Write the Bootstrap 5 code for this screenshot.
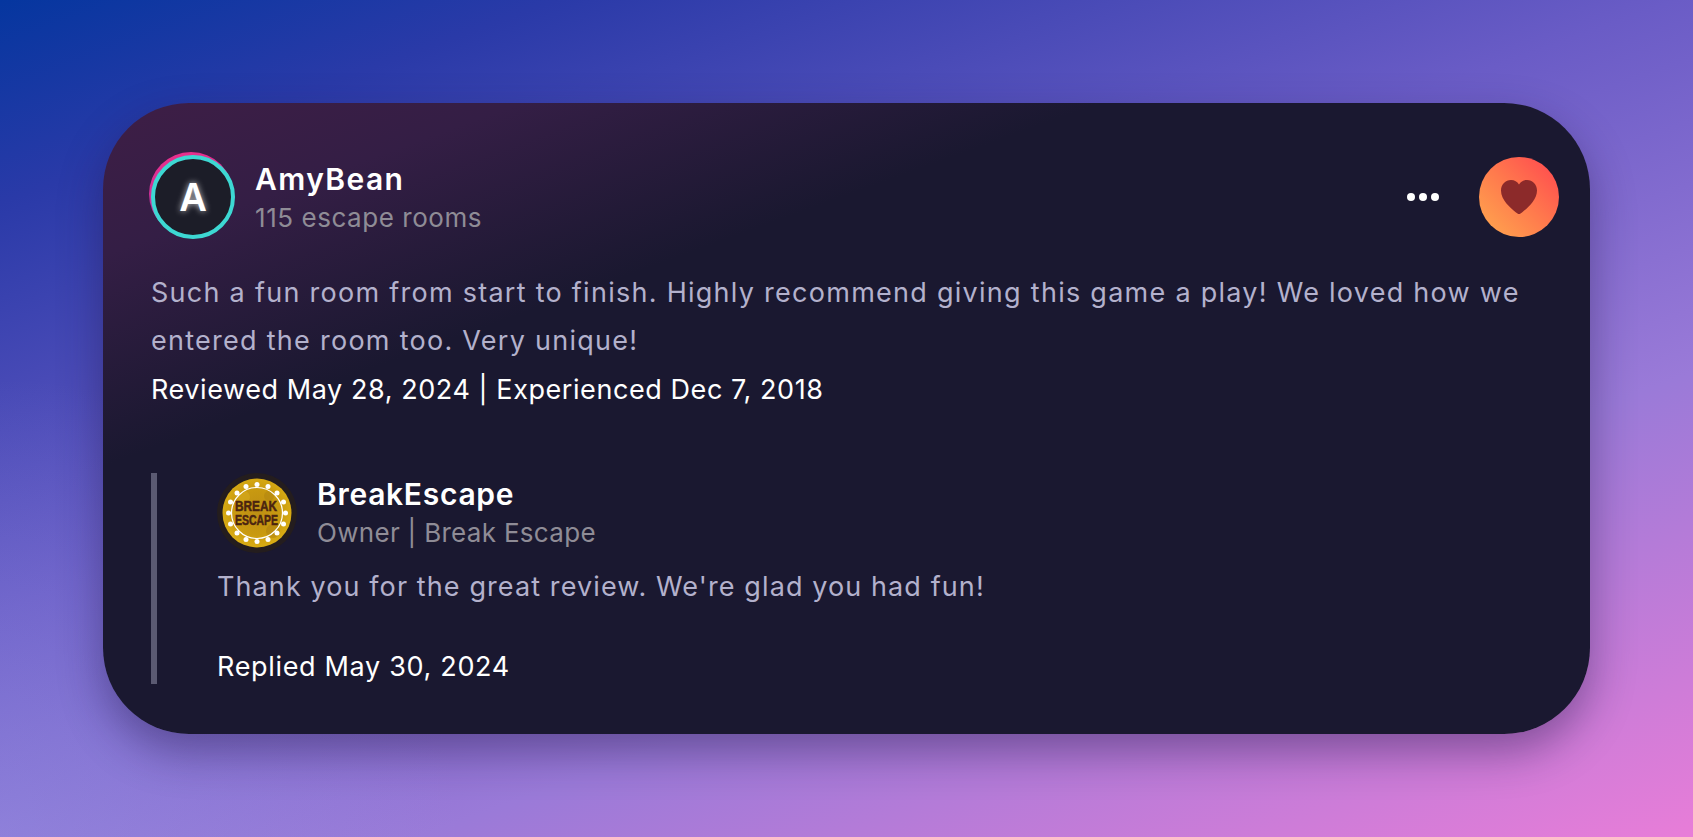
<!doctype html>
<html lang="en">
<head>
<meta charset="utf-8">
<title>Review</title>
<link href="https://cdn.jsdelivr.net/npm/bootstrap@5.3.0/dist/css/bootstrap.min.css" rel="stylesheet">
<style>
html,body{height:100%}
body{font-family:Inter,"Liberation Sans",sans-serif;background:radial-gradient(circle 460px at 0 100%,rgba(160,170,240,.3),rgba(160,170,240,0)),linear-gradient(160deg,#05369f 0%,#2a3aa8 14%,#6a5cc6 42%,#9a7ad8 68%,#e87dd8 100%);overflow:hidden}
.stage{height:837px;padding:103px}
.rv-card{height:631px;border-radius:86px;padding:54px 31px 0 48px;background:linear-gradient(160deg,#3e1e46 0%,#341e45 13%,#1a1830 31%,#1a1830 100%);box-shadow:0 18px 44px rgba(30,20,70,.42)}
.rv-head{height:80px}
.ava-ring{width:84px;height:84px;flex:none;align-self:flex-start;margin:-5px 22px 0 -2px;background:linear-gradient(170deg,#ee2f8a 0%,#c52f9c 55%,#9a45c0 100%)}
.ava-in{width:84px;height:84px;margin:3px 0 0 2px;border:4px solid #3dd8d3;background:#1c1d28;color:#fff;font-size:38px;font-weight:600;text-shadow:0 0 6px rgba(255,255,255,.75)}
.who{color:#fff;font-size:30px;font-weight:600;line-height:40px}
.who-a{letter-spacing:1.4px}
.who-b{letter-spacing:.7px}
.sub{color:#8f8c96;font-size:26px;line-height:38px}
.sub-a{letter-spacing:.55px}
.sub-b{letter-spacing:.3px}
.rv-names{padding-top:2px}
.dots{gap:4px;margin-right:40px}
.dots span{width:8px;height:8px;background:#fff}
.like{width:80px;height:80px;background:linear-gradient(225deg,#ff4d4f 8%,#ff7a4d 50%,#ffa34e 92%)}
.rv-text{color:#b3b1cc;font-size:27px;letter-spacing:1.27px;line-height:48px;margin:32px 0 0}
.rv-meta{color:#fff;font-size:27px;letter-spacing:.57px;line-height:48px;margin:1px 0 0}
.reply{margin-top:59px;height:211px;border-left:6px solid #5b5a72;padding-left:60px}
.logo{width:80px;height:80px;flex:none;margin-right:20px}
.rv-owner{margin-top:1px}
.reply-text{color:#b3b1cc;font-size:27px;letter-spacing:1.1px;line-height:48px;margin:10px 0 0}
.reply-meta{color:#fff;font-size:27px;letter-spacing:.67px;line-height:48px;margin:32px 0 0}
</style>
</head>
<body>
<main class="stage">
  <section class="rv-card">
    <header class="rv-head d-flex align-items-center">
      <div class="ava-ring rounded-circle">
        <div class="ava-in rounded-circle d-flex align-items-center justify-content-center">A</div>
      </div>
      <div class="rv-names flex-grow-1">
        <div class="who who-a">AmyBean</div>
        <div class="sub sub-a">115 escape rooms</div>
      </div>
      <div class="dots d-flex"><span class="rounded-circle"></span><span class="rounded-circle"></span><span class="rounded-circle"></span></div>
      <div class="like rounded-circle d-flex align-items-center justify-content-center">
        <svg width="36" height="34" viewBox="0 0 36 34" aria-hidden="true"><path fill="#8c2a2a" d="M18 34c-1 0-2-.6-3-1.500C9 27.500 0 20 0 10.500 0 4.500 4.500 0 10 0c3.500 0 6.300 1.700 8 4.500C19.700 1.700 22.500 0 26 0c5.500 0 10 4.500 10 10.500 0 9.500-9 17-15 22-1 .9-2 1.500-3 1.500z"/></svg>
      </div>
    </header>
    <p class="rv-text">Such a fun room from start to finish. Highly recommend giving this game a play! We loved how we entered the room too. Very unique!</p>
    <p class="rv-meta">Reviewed May 28, 2024 | Experienced Dec 7, 2018</p>
    <div class="reply">
      <div class="rv-owner d-flex align-items-center">
        <svg class="logo" viewBox="0 0 80 80" role="img" aria-label="Break Escape logo">
          <defs><radialGradient id="gold" cx=".5" cy=".48" r=".55"><stop offset="0" stop-color="#bd8e14"/><stop offset=".62" stop-color="#c99a10"/><stop offset="1" stop-color="#dcb014"/></radialGradient></defs>
          <circle cx="40" cy="40" r="40" fill="#241d1e"/>
          <circle cx="40" cy="40" r="34.500" fill="url(#gold)"/>
          <circle cx="27" cy="24" r="6" fill="#d9ae20" opacity=".5"/><circle cx="56" cy="58" r="7" fill="#a87c12" opacity=".45"/><circle cx="52" cy="23" r="5" fill="#a87c12" opacity=".4"/>
          <circle cx="40" cy="40" r="25.500" fill="none" stroke="#fff" stroke-width="1.2"/>
          <g fill="#fff">
            <circle cx="40" cy="11.500" r="2.500"/><circle cx="29" cy="13.500" r="2.500"/><circle cx="51" cy="13.500" r="2.500"/><circle cx="20" cy="20" r="2.500"/><circle cx="60" cy="20" r="2.500"/><circle cx="13.500" cy="29" r="2.500"/><circle cx="66.500" cy="29" r="2.500"/><circle cx="11.500" cy="40" r="2.500"/><circle cx="68.500" cy="40" r="2.500"/><circle cx="13.500" cy="51" r="2.500"/><circle cx="66.500" cy="51" r="2.500"/><circle cx="20" cy="60" r="2.500"/><circle cx="60" cy="60" r="2.500"/><circle cx="29" cy="66.500" r="2.500"/><circle cx="51" cy="66.500" r="2.500"/><circle cx="40" cy="68.500" r="2.500"/>
          </g>
          <g fill="#4a2410" stroke="#4a2410" stroke-width=".5" font-family="'Liberation Sans',sans-serif" font-weight="700" text-anchor="middle">
            <text x="39" y="38" font-size="15.500" textLength="42" lengthAdjust="spacingAndGlyphs">BREAK</text>
            <text x="39.500" y="52" font-size="14" textLength="43" lengthAdjust="spacingAndGlyphs">ESCAPE</text>
          </g>
        </svg>
        <div>
          <div class="who who-b">BreakEscape</div>
          <div class="sub sub-b">Owner | Break Escape</div>
        </div>
      </div>
      <p class="reply-text">Thank you for the great review. We're glad you had fun!</p>
      <p class="reply-meta">Replied May 30, 2024</p>
    </div>
  </section>
</main>
<script src="https://cdn.jsdelivr.net/npm/bootstrap@5.3.0/dist/js/bootstrap.bundle.min.js"></script>
</body>
</html>
